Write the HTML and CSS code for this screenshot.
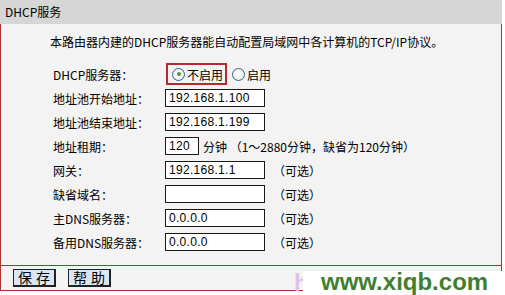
FILE: index.html
```html
<!DOCTYPE html>
<html lang="zh-CN">
<head>
    <meta charset="UTF-8">
    <title>DHCP服务</title>
    <link rel="stylesheet" href="styles.css">
</head>
<body>
    <div class="page">
        <div class="title-bar">DHCP服务</div>

        <div class="panel">
            <p class="intro">本路由器内建的DHCP服务器能自动配置局域网中各计算机的TCP/IP协议。</p>

            <div class="form">
                <div class="row">
                    <span class="label">DHCP服务器：</span>
                    <div class="radio-group">
                        <span class="choice highlight"><span class="radio checked"></span>不启用</span>
                        <span class="choice"><span class="radio"></span>启用</span>
                    </div>
                </div>
                <div class="row">
                    <span class="label">地址池开始地址：</span>
                    <input type="text" class="field" value="192.168.1.100">
                </div>
                <div class="row">
                    <span class="label">地址池结束地址：</span>
                    <input type="text" class="field" value="192.168.1.199">
                </div>
                <div class="row">
                    <span class="label">地址租期：</span>
                    <input type="text" class="field short" value="120">
                    <span class="hint narrow">分钟 （1～2880分钟，缺省为120分钟）</span>
                </div>
                <div class="row">
                    <span class="label">网关：</span>
                    <input type="text" class="field" value="192.168.1.1">
                    <span class="hint">（可选）</span>
                </div>
                <div class="row">
                    <span class="label">缺省域名：</span>
                    <input type="text" class="field" value="">
                    <span class="hint">（可选）</span>
                </div>
                <div class="row">
                    <span class="label">主DNS服务器：</span>
                    <input type="text" class="field" value="0.0.0.0">
                    <span class="hint">（可选）</span>
                </div>
                <div class="row">
                    <span class="label">备用DNS服务器：</span>
                    <input type="text" class="field" value="0.0.0.0">
                    <span class="hint">（可选）</span>
                </div>
            </div>
        </div>

        <div class="button-bar">
            <button class="btn">保存</button>
            <button class="btn">帮助</button>
        </div>
    </div>

    <div class="watermark">
        <span class="ghost">h</span>
        <span class="site">www.xiqb.com</span>
    </div>
</body>
</html>
```

FILE: styles.css
```css
/* General styles */
* {
    box-sizing: border-box;
    margin: 0;
    padding: 0;
}

body {
    width: 505px;
    height: 295px;
    overflow: hidden;
    background: #fff;
    font-family: "Noto Sans CJK SC", "Liberation Sans", sans-serif;
    font-size: 12px;
    color: #000;
    position: relative;
}

.page {
    width: 502px;
}

.title-bar {
    height: 24px;
    line-height: 24px;
    padding-left: 5px;
    background: #d6d6d6;
}

.panel {
    background: #f4f3f3;
    border-left: 1px solid #a83434;
    border-right: 1px solid #a83434;
    border-bottom: 1px solid #a83434;
    padding: 10px 0 11px 49px;
}

.intro {
    height: 16px;
    line-height: 16px;
    margin-bottom: 12px;
}

.form {
    display: flex;
    flex-direction: column;
    padding-left: 3px;
}

.row {
    display: flex;
    align-items: center;
    height: 24px;
}

.label {
    width: 112px;
    flex-shrink: 0;
}

.field {
    width: 100px;
    height: 18px;
    border: 1px solid #1a1a1a;
    background: #fff;
    padding: 0 3px;
    font-family: "Liberation Sans", sans-serif;
    font-size: 12px;
    letter-spacing: 0.3px;
    color: #000;
    outline: none;
}

.field.short {
    width: 34px;
}

.hint {
    margin-left: 8px;
}

.hint.narrow {
    margin-left: 4px;
}

.radio-group {
    display: flex;
    align-items: center;
    gap: 5px;
}

.choice {
    display: flex;
    align-items: center;
    gap: 2px;
    font-size: 12px;
}

.choice.highlight {
    height: 22px;
    padding: 0 2px 0 4px;
    border: 2px solid #b52a2a;
    margin-left: 1px;
}

.radio {
    width: 13px;
    height: 13px;
    border: 1px solid #33608f;
    border-radius: 50%;
    background: radial-gradient(circle at 40% 40%, #fff 0%, #e6e6e0 100%);
    position: relative;
}

.radio.checked::after {
    content: "";
    position: absolute;
    left: 3.5px;
    top: 3.5px;
    width: 4px;
    height: 4px;
    border-radius: 50%;
    background: #3e9a3e;
}

.button-bar {
    height: 25px;
    display: flex;
    align-items: center;
    gap: 12px;
    padding-left: 12px;
    background: #f4f3f3;
    border-left: 1px solid #a83434;
    border-right: 1px solid #a83434;
    border-bottom: 1px solid #a83434;
}

.btn {
    width: 43px;
    height: 18px;
    padding: 0 0 0 4px;
    border: 1px solid #222;
    border-right-width: 2px;
    border-bottom-width: 2px;
    background: #d8e6f6;
    font-family: "Noto Sans CJK SC", sans-serif;
    font-size: 14px;
    line-height: 15px;
    letter-spacing: 4px;
    white-space: nowrap;
    text-align: left;
    color: #000;
}

/* watermark over the bottom corner */
.watermark {
    position: absolute;
    left: 294px;
    top: 271px;
    height: 24px;
    display: flex;
    align-items: center;
}

.ghost {
    width: 9px;
    font-family: "Liberation Sans", sans-serif;
    font-size: 24px;
    line-height: 24px;
    font-weight: bold;
    color: #dcc3e6;
}

.site {
    width: 211px;
    height: 24px;
    line-height: 22px;
    padding-left: 18px;
    background: #fff;
    font-family: "Liberation Sans", sans-serif;
    font-size: 24px;
    font-weight: bold;
    color: #3f8030;
}
```
